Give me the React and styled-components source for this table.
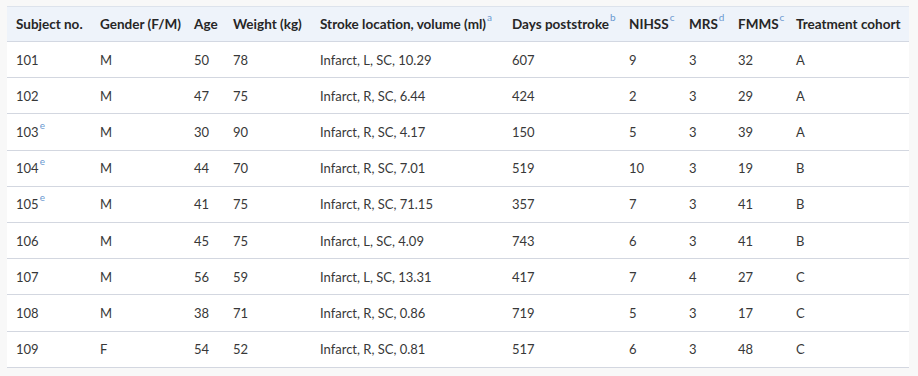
import React from "react";
import styled, { createGlobalStyle } from "styled-components";

const GlobalStyle = createGlobalStyle`
  html, body {
    margin: 0;
    padding: 0;
    background: #f8f8f8;
  }
  body {
    font-family: Lato, "Noto Sans", sans-serif;
  }
`;

const columns = [
  { label: "Subject no.", width: 84 },
  { label: "Gender (F/M)", width: 94 },
  { label: "Age", width: 39 },
  { label: "Weight (kg)", width: 87 },
  { label: "Stroke location, volume (ml)", note: "a", width: 192 },
  { label: "Days poststroke", note: "b", width: 117 },
  { label: "NIHSS", note: "c", width: 60 },
  { label: "MRS", note: "d", width: 49 },
  { label: "FMMS", note: "c", width: 58 },
  { label: "Treatment cohort", width: 122 },
];

const rows = [
  ["101", "M", "50", "78", "Infarct, L, SC, 10.29", "607", "9", "3", "32", "A"],
  ["102", "M", "47", "75", "Infarct, R, SC, 6.44", "424", "2", "3", "29", "A"],
  ["103|e", "M", "30", "90", "Infarct, R, SC, 4.17", "150", "5", "3", "39", "A"],
  ["104|e", "M", "44", "70", "Infarct, R, SC, 7.01", "519", "10", "3", "19", "B"],
  ["105|e", "M", "41", "75", "Infarct, R, SC, 71.15", "357", "7", "3", "41", "B"],
  ["106", "M", "45", "75", "Infarct, L, SC, 4.09", "743", "6", "3", "41", "B"],
  ["107", "M", "56", "59", "Infarct, L, SC, 13.31", "417", "7", "4", "27", "C"],
  ["108", "M", "38", "71", "Infarct, R, SC, 0.86", "719", "5", "3", "17", "C"],
  ["109", "F", "54", "52", "Infarct, R, SC, 0.81", "517", "6", "3", "48", "C"],
];

const Wrap = styled.div`
  padding: 6px 9px 0 7px;
`;

const Table = styled.table`
  width: 902px;
  table-layout: fixed;
  border-collapse: collapse;
  background: #fff;
  border-top: 1px solid #dde3ec;
`;

const Head = styled.th`
  background: #eef3fa;
  color: #262626;
  font-size: 13.5px;
  font-weight: 700;
  text-align: left;
  white-space: nowrap;
  height: 35px;
  padding: 0 0 0 9px;
  border-bottom: 1px solid #d3d8e2;
  box-sizing: border-box;
`;

const Cell = styled.td`
  color: #383838;
  font-size: 13px;
  text-align: left;
  white-space: nowrap;
  height: 36.2px;
  padding: 0 0 0 9px;
  border-bottom: 1px solid #d3d7e0;
  box-sizing: border-box;
`;

const Note = styled.sup`
  color: #6a98d0;
  font-weight: 400;
  font-size: 10px;
  margin-left: 1px;
  position: relative;
  top: -3px;
  vertical-align: super;
  line-height: 0;
`;

function Value({ text }) {
  const [main, note] = text.split("|");
  return (
    <>
      {main}
      {note && <Note>{note}</Note>}
    </>
  );
}

export default function App() {
  return (
    <Wrap>
      <GlobalStyle />
      <Table>
        <colgroup>
          {columns.map((c) => (
            <col key={c.label} style={{ width: c.width }} />
          ))}
        </colgroup>
        <thead>
          <tr>
            {columns.map((c) => (
              <Head key={c.label}>
                {c.label}
                {c.note && <Note>{c.note}</Note>}
              </Head>
            ))}
          </tr>
        </thead>
        <tbody>
          {rows.map((r) => (
            <tr key={r[0]}>
              {r.map((v, i) => (
                <Cell key={i}>
                  <Value text={v} />
                </Cell>
              ))}
            </tr>
          ))}
        </tbody>
      </Table>
    </Wrap>
  );
}
